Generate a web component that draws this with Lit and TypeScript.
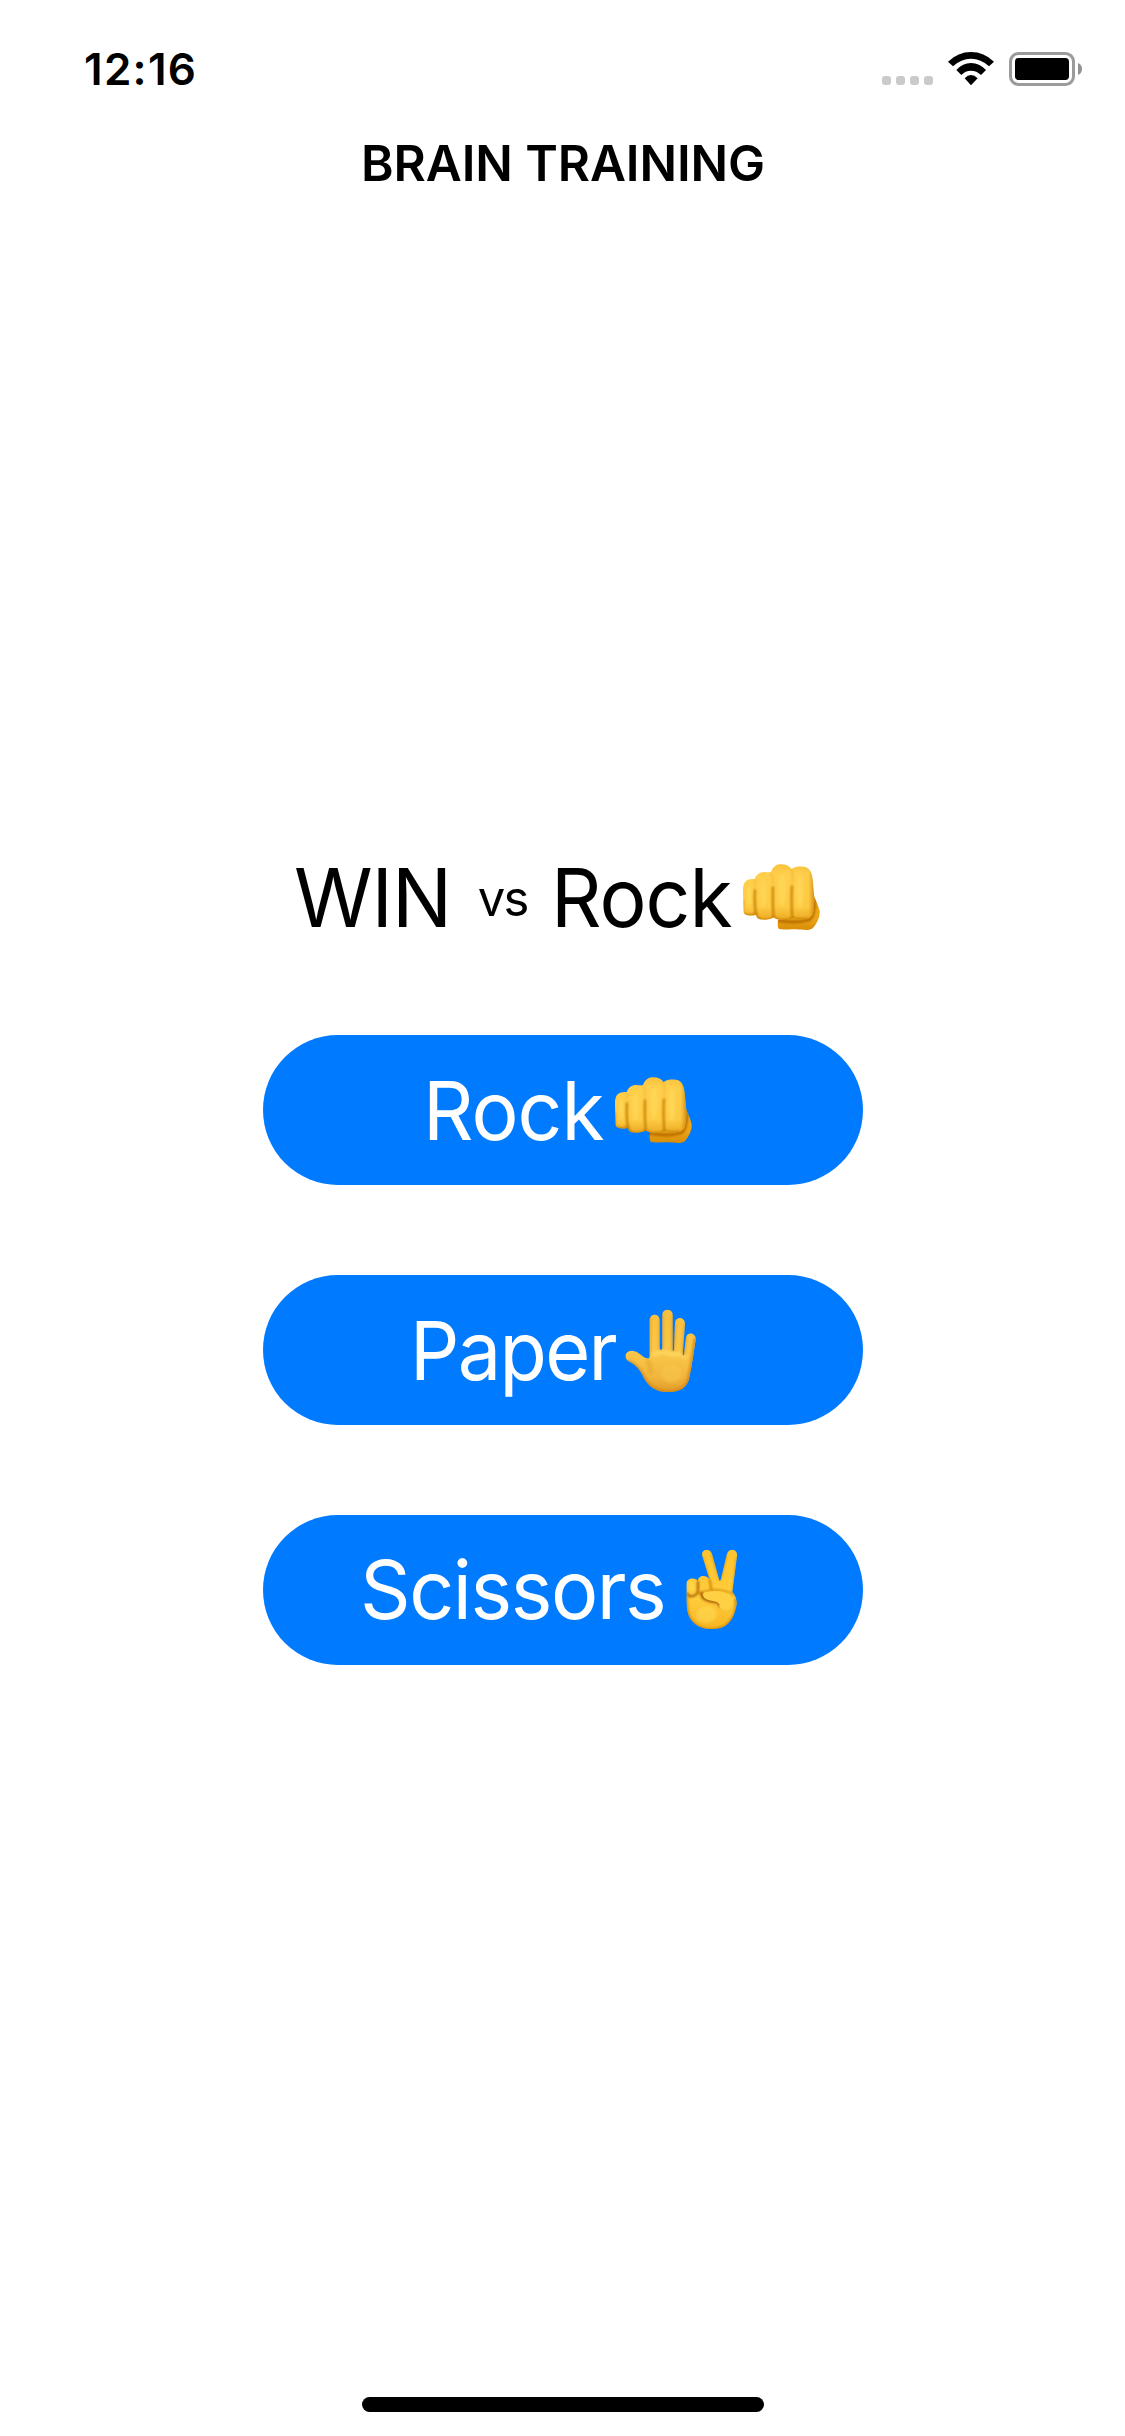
import { LitElement, html, svg, css } from "lit";
import { customElement, property } from "lit/decorators.js";

type Hand = "rock" | "paper" | "scissors";

const rock = svg`
  <svg viewBox="10 -12 294 306">
    <defs>
      <linearGradient id="palm" x1="0" y1="0" x2="0" y2="1">
        <stop offset="0" stop-color="#f2ac18"/><stop offset=".7" stop-color="#eba414"/><stop offset="1" stop-color="#d48a06"/>
      </linearGradient>
      <linearGradient id="skin" x1="0" y1="0" x2="0" y2="1">
        <stop offset="0" stop-color="#f8c03a"/><stop offset=".2" stop-color="#ffcf4c"/><stop offset=".75" stop-color="#fecb43"/><stop offset="1" stop-color="#eaa71f"/>
      </linearGradient>
      <linearGradient id="edge" x1="0" y1="0" x2="1" y2="0">
        <stop offset="0" stop-color="#d48c0b" stop-opacity="0"/><stop offset=".6" stop-color="#d48c0b" stop-opacity=".05"/><stop offset="1" stop-color="#c47c04" stop-opacity=".75"/>
      </linearGradient>
      <filter id="soft" x="-30%" y="-30%" width="160%" height="160%"><feGaussianBlur stdDeviation="2.6"/></filter>
      <clipPath id="back"><path d="M145 210C144 219 142 232 148 237C165 240 180 236 200 238C220 239 239 244 250 234C262 220 271 202 270 184C266 163 254 145 250 130L190 190Z"/></clipPath>
      <clipPath id="fist"><path d="M40 130C38 94 50 85 75 87C80 73 92 65 106 66Q117 68 124 66C130 51 140 43 153 43C167 42 179 48 186 57C198 48 219 49 230 52C250 62 249 90 252 123C256 145 254 176 249 194C240 208 222 210 188 205C176 213 139 212 133 202C120 211 88 211 82 203L79 194C64 199 44 197 42 187Z"/></clipPath>
    </defs>
    <g clip-path="url(#back)">
      <rect x="138" y="120" width="136" height="124" fill="url(#palm)"/>
      <path d="M142 211Q200 222 240 209Q257 195 255 130" fill="none" stroke="#b86c00" stroke-width="9" filter="url(#soft)"/>
    </g>
    <g clip-path="url(#fist)">
      <rect x="35" y="38" width="225" height="176" fill="url(#skin)"/>
      <g fill="none" stroke="#c17a06" filter="url(#soft)">
        <path d="M76 118Q73 155 79 197M130 109Q128 155 132 207M187 106Q184 150 188 207" stroke-width="6"/>
        <path d="M42 192Q61 201 79 191Q83 211 105 210Q127 211 132 200Q138 211 160 211Q181 211 187 203Q211 211 237 206" stroke-width="6"/>
        <path d="M40 150V187" stroke-width="3"/>
        <path d="M75 87Q78 96 76 108M125 68Q132 82 130 102M186 57Q190 72 188 98" stroke-width="3" opacity=".35"/>
      </g>
      <rect x="210" y="52" width="44" height="160" fill="url(#edge)"/>
      <g fill="#ffdc61" opacity=".55" filter="url(#soft)">
        <ellipse cx="58" cy="137" rx="8" ry="31"/><ellipse cx="101" cy="133" rx="10" ry="42"/><ellipse cx="157" cy="120" rx="12" ry="48"/><ellipse cx="211" cy="125" rx="11" ry="50"/>
      </g>
    </g>
  </svg>`;

const paper = svg`
  <svg viewBox="3 12 294 306">
    <defs>
      <linearGradient id="skin" x1="0" y1="0" x2="0" y2="1">
        <stop offset="0" stop-color="#f9bf3c"/><stop offset=".5" stop-color="#fac84a"/><stop offset=".8" stop-color="#f1b63d"/><stop offset="1" stop-color="#df9827"/>
      </linearGradient>
      <filter id="soft" x="-30%" y="-30%" width="160%" height="160%"><feGaussianBlur stdDeviation="4"/></filter>
      <clipPath id="hand"><path d="M119 184V76C119 54 149 54 149 76V160Q153 171 157 160V59C157 39 188 39 188 59V165Q190 174 192 163L195 83C196 63 225 64 225 86L218 178Q219 187 222 178L228 128C231 109 259 113 257 134L249 186Q245 214 239 243Q232 291 176 291C138 291 118 276 103 251C91 225 80 211 55 198C40 188 45 168 66 167C88 168 96 188 113 190Q119 191 119 184Z"/></clipPath>
    </defs>
    <g clip-path="url(#hand)">
      <rect x="40" y="38" width="225" height="260" fill="url(#skin)"/>
      <g fill="none" stroke="#d58b1b" filter="url(#soft)">
        <path d="M119 65V177M149 75V166M157 58V160M188 60V170M195 82L191 166M225 85L218 186M228 128L222 180" stroke-width="5" opacity=".75"/>
        <path d="M257 130L249 190Q245 220 238 246Q230 291 176 291C135 291 115 275 102 250C90 225 77 211 52 200" stroke-width="12"/>
        <path d="M112 194Q122 212 122 238" stroke-width="12" opacity=".35"/>
      </g>
      <path d="M126 180Q160 164 188 179Q207 172 229 190" fill="none" stroke="#ffdb67" stroke-width="14" filter="url(#soft)" opacity=".7"/>
      <ellipse cx="184" cy="235" rx="30" ry="28" fill="#f8c54d" opacity=".6" filter="url(#soft)"/>
    </g>
  </svg>`;

const scissors = svg`
  <svg viewBox="-24 12 294 306">
    <defs>
      <linearGradient id="skin" x1="0" y1="0" x2="0" y2="1">
        <stop offset="0" stop-color="#ffc42c"/><stop offset=".6" stop-color="#ffcd3d"/><stop offset="1" stop-color="#f6b421"/>
      </linearGradient>
      <filter id="soft" x="-30%" y="-30%" width="160%" height="160%"><feGaussianBlur stdDeviation="2.6"/></filter>
      <clipPath id="hand"><path d="M49 149C49 126 78 127 84 138C83 119 112 118 119 134L97 63C91 43 119 36 126 57L148 136Q151 139 153 132L170 60C174 37 204 40 201 63L187 171C200 185 203 205 197 221C188 257 171 281 128 282C88 284 58 263 52 226C49 202 50 187 49 149Z"/></clipPath>
    </defs>
    <g clip-path="url(#hand)">
      <rect x="42" y="36" width="165" height="252" fill="url(#skin)"/>
      <g fill="none" filter="url(#soft)" stroke="#cc8206">
        <path d="M50 172Q54 185 66 184Q82 181 84 167V138" stroke-width="6" stroke="#a85f00"/>
        <path d="M84 168Q88 179 97 175M119 134L124 164" stroke-width="6"/>
        <path d="M97 63L119 136M124 55L148 137M170 60L152 135M200 65L187 174" stroke-width="4" opacity=".7"/>
        <path d="M50 186Q48 237 67 260Q92 286 128 283Q172 282 190 244Q202 216 196 190" stroke-width="8" opacity=".8"/>
        <path d="M97 170Q92 187 105 193Q122 200 137 201Q151 204 150 217" stroke="#a65d00" stroke-width="8"/>
        <path d="M100 170Q130 162 155 167Q178 168 193 182" stroke-width="4"/>
      </g>
      <path d="M99 178Q100 170 115 170Q145 164 167 174C193 183 194 209 178 222Q164 233 148 216Q151 202 133 199Q99 195 99 178Z" fill="#ffd044"/>
      <ellipse cx="109" cy="239" rx="31" ry="25" fill="#ffda58" opacity=".55" filter="url(#soft)"/>
      <ellipse cx="65" cy="153" rx="9" ry="14" fill="#ffd958" opacity=".6" filter="url(#soft)"/>
    </g>
  </svg>`;

const HANDS = { rock, paper, scissors };

@customElement("hand-glyph")
class HandGlyph extends LitElement {
  @property() hand: Hand = "rock";

  static styles = css`
    :host { display: block; width: 98px; height: 102px; flex: none; }
    svg { display: block; width: 98px; height: 102px; }
  `;

  render() {
    return HANDS[this.hand];
  }
}

@customElement("app-root")
class AppRoot extends LitElement {
  static styles = css`
    :host { display: block; }
    .screen {
      box-sizing: border-box; width: 1125px; height: 2436px; background: #fff; color: #000;
      font-family: Inter, "Liberation Sans", sans-serif;
      display: flex; flex-direction: column; align-items: center;
    }
    .status {
      box-sizing: border-box; width: 100%; height: 132px; padding: 39px 43px 0 84px;
      display: flex; justify-content: space-between; align-items: flex-start;
    }
    .time { font-size: 44px; line-height: 60px; font-weight: 600; letter-spacing: 1.3px; }
    .indicators { display: block; width: 200px; height: 34px; margin-top: 13px; }
    .title { margin: 0 0 0 1px; font-size: 49.5px; line-height: 62px; font-weight: 600; letter-spacing: -0.1px; white-space: nowrap; }
    .game { margin-top: 652px; display: flex; flex-direction: column; align-items: center; }
    .prompt {
      height: 102px; margin-bottom: 87px; display: flex; align-items: center;
      font-size: 81.4px; line-height: 102px; white-space: nowrap;
    }
    .word { flex: none; text-align: left; padding-top: 2px; transform-origin: 0 50%; }
    .win { width: 183.5px; letter-spacing: -1px; transform: scaleX(0.98); }
    .versus { width: 72.8px; font-size: 49px; line-height: 60px; padding-top: 3px; letter-spacing: -1.8px; }
    .rock { width: 182px; letter-spacing: -1px; transform: scaleX(0.965); }
    .paper { width: 200.8px; margin-left: -6px; letter-spacing: -1.75px; transform: scaleX(0.95); }
    .scissors { width: 302.5px; margin-left: -5px; padding-top: 0; letter-spacing: -1.5px; transform: scaleX(0.97); }
    .choices { display: flex; flex-direction: column; gap: 90px; }
    .choice {
      box-sizing: border-box; width: 600px; height: 150px; padding: 0; border: 0; border-radius: 75px;
      background: #007aff; color: #fff; font: inherit; font-size: 81.4px; line-height: 102px;
      display: flex; align-items: center; justify-content: center; white-space: nowrap;
    }
    .home { width: 402px; height: 15px; border-radius: 8px; background: #000; margin: auto 0 24px; }
  `;

  private choices: { label: string; hand: Hand }[] = [
    { label: "Rock", hand: "rock" },
    { label: "Paper", hand: "paper" },
    { label: "Scissors", hand: "scissors" },
  ];

  render() {
    return html`
      <main class="screen">
        <header class="status">
          <span class="time">12:16</span>
          <svg class="indicators" viewBox="66 66 600 102">
            <g fill="#cacaca">
              <rect x="66" y="138" width="27" height="27" rx="9"/><rect x="108" y="138" width="27" height="27" rx="9"/>
              <rect x="150" y="138" width="27" height="27" rx="9"/><rect x="192" y="138" width="27" height="27" rx="9"/>
            </g>
            <path d="M264 95Q294 66 333 66T402 95L387 109Q363 86 333 86T279 109ZM289 120Q308 99 333 99T378 120L363 135Q350 122 333 122T304 135ZM314 145Q323 135 333 135T353 145L333 166Z"/>
            <rect x="451.500" y="70.500" width="189" height="93" rx="24" fill="none" stroke="#9b9b9b" stroke-width="9"/>
            <rect x="465" y="84" width="162" height="66" rx="11"/>
            <path d="M654 99Q666 104 666 117T654 135Z" fill="#929292"/>
          </svg>
        </header>
        <h1 class="title">BRAIN TRAINING</h1>
        <section class="game">
          <div class="prompt">
            <span class="word win">WIN</span><span class="word versus">vs</span><span class="word rock">Rock</span>
            <hand-glyph hand="rock"></hand-glyph>
          </div>
          <div class="choices">
            ${this.choices.map(
              (c) => html`<button class="choice"><span class="word ${c.hand}">${c.label}</span><hand-glyph hand=${c.hand}></hand-glyph></button>`,
            )}
          </div>
        </section>
        <div class="home"></div>
      </main>
    `;
  }
}
